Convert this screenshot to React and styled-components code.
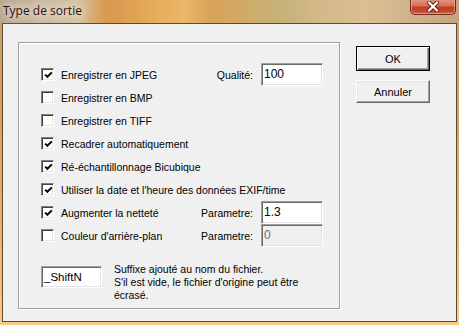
import React from "react";
import styled, { createGlobalStyle } from "styled-components";

const GlobalStyle = createGlobalStyle`
  html, body {
    margin: 0;
    padding: 0;
    background: #ffffff;
  }
  body {
    font-family: "Liberation Sans", Arial, sans-serif;
    font-size: 10.5px;
    color: #000;
  }
`;

const options = [
  { label: "Enregistrer en JPEG", checked: true, param: { label: "Qualité:", value: "100" } },
  { label: "Enregistrer en BMP", checked: false },
  { label: "Enregistrer en TIFF", checked: false },
  { label: "Recadrer automatiquement", checked: true },
  { label: "Ré-échantillonnage Bicubique", checked: true },
  { label: "Utiliser la date et l'heure des données EXIF/time", checked: true },
  { label: "Augmenter la netteté", checked: true, param: { label: "Parametre:", value: "1.3" } },
  { label: "Couleur d'arrière-plan", checked: false, param: { label: "Parametre:", value: "0", disabled: true } },
];

export default function App() {
  return (
    <>
      <GlobalStyle />
      <Window>
        <TitleBar>
          <Title>Type de sortie</Title>
          <CloseButton>
            <svg width="14" height="11" viewBox="0 0 14 11">
              <path d="M3 1.5 L11 9.5 M11 1.5 L3 9.5" stroke="#5a2418" strokeWidth="4" strokeLinecap="round" />
              <path d="M3 1.5 L11 9.5 M11 1.5 L3 9.5" stroke="#ffffff" strokeWidth="2.2" strokeLinecap="round" />
            </svg>
          </CloseButton>
        </TitleBar>
        <Frame>
          <Client>
            <GroupBox>
              <Rows>
                {options.map((o) => (
                  <Row key={o.label}>
                    <CheckBox>
                      {o.checked && (
                        <svg width="9" height="9" viewBox="0 0 9 9">
                          <path d="M1.2 3.6 L3.4 5.8 L7.8 1.4" stroke="#000" strokeWidth="2" fill="none" />
                        </svg>
                      )}
                    </CheckBox>
                    <Label>{o.label}</Label>
                    {o.param && (
                      <ParamGroup>
                        <ParamLabel>{o.param.label}</ParamLabel>
                        <Field $disabled={o.param.disabled}>{o.param.value}</Field>
                      </ParamGroup>
                    )}
                  </Row>
                ))}
              </Rows>
              <SuffixRow>
                <SuffixField>_ShiftN</SuffixField>
                <SuffixText>
                  Suffixe ajouté au nom du fichier.
                  <br />
                  S'il est vide, le fichier d'origine peut être
                  <br />
                  écrasé.
                </SuffixText>
              </SuffixRow>
            </GroupBox>
            <ButtonColumn>
              <Button $default>OK</Button>
              <Button>Annuler</Button>
            </ButtonColumn>
          </Client>
        </Frame>
      </Window>
    </>
  );
}

const Window = styled.div`
  width: 459px;
  height: 325px;
  display: flex;
  flex-direction: column;
  background: linear-gradient(180deg, #c4a070 0%, #d9a35c 40%, #f0bd70 85%, #f8cc86 100%);
  overflow: hidden;
`;

const TitleBar = styled.div`
  height: 23px;
  flex-shrink: 0;
  position: relative;
  display: flex;
  align-items: center;
  padding-left: 3px;
  background: linear-gradient(
    90deg,
    #b8a68c 0%,
    #cbbba2 10%,
    #d7c3a0 17%,
    #d8984e 23%,
    #e4a858 32%,
    #eab868 40%,
    #d8a258 46%,
    #cfac68 54%,
    #c6b27a 62%,
    #d4b98a 70%,
    #dbbf92 80%,
    #d0b28a 90%,
    #c4a47c 100%
  );
`;

const Title = styled.span`
  font-family: "Open Sans", "Noto Sans", sans-serif;
  font-size: 12px;
  color: #2a1214;
  text-shadow: 0 0 6px #efe6d8, 0 0 10px #efe6d8, 0 0 14px #efe6d8;
  margin-top: -3px;
`;

const CloseButton = styled.div`
  position: absolute;
  left: 410px;
  top: -1px;
  width: 46px;
  height: 16px;
  box-sizing: border-box;
  border: 1px solid #6a2a20;
  border-top: none;
  border-radius: 0 0 5px 5px;
  background: linear-gradient(180deg, #e49a86 0%, #d86e56 45%, #c43c24 55%, #c44a2a 85%, #d47048 100%);
  box-shadow: inset 0 0 0 1px rgba(255, 210, 190, 0.45);
  display: flex;
  align-items: center;
  justify-content: center;
`;

const Frame = styled.div`
  flex: 1;
  display: flex;
  padding: 0 2px 3px 2px;
`;

const Client = styled.div`
  flex: 1;
  display: flex;
  align-items: flex-start;
  background: #f0f0f0;
  border: 1px solid #5e4a34;
  padding: 18px 0 0 15px;
`;

const GroupBox = styled.div`
  width: 322px;
  height: 267px;
  box-sizing: border-box;
  border: 1px solid #a0a0a0;
  box-shadow: inset 1px 1px 0 #ffffff, 1px 1px 0 #ffffff;
  padding: 20px 16px 0 22px;
  display: flex;
  flex-direction: column;
`;

const Rows = styled.div`
  display: flex;
  flex-direction: column;
`;

const Row = styled.div`
  height: 23px;
  display: flex;
  align-items: center;
`;

const CheckBox = styled.span`
  width: 13px;
  height: 13px;
  box-sizing: border-box;
  flex-shrink: 0;
  background: #ffffff;
  border: 1px solid;
  border-color: #808080 #ffffff #ffffff #808080;
  box-shadow: inset 1px 1px 0 #404040, inset -1px -1px 0 #e3e3e3;
  display: flex;
  align-items: center;
  justify-content: center;
  padding: 1px 0 0 1px;
`;

const Label = styled.span`
  margin-left: 7px;
  white-space: nowrap;
`;

const ParamGroup = styled.div`
  margin-left: auto;
  display: flex;
  align-items: center;
  gap: 8px;
`;

const ParamLabel = styled.span`
  white-space: nowrap;
`;

const Field = styled.div`
  width: 62px;
  height: 23px;
  box-sizing: border-box;
  border: 1px solid;
  border-color: #a0a0a0 #ffffff #ffffff #a0a0a0;
  box-shadow: inset 1px 1px 0 #696969, inset -1px -1px 0 #e3e3e3;
  background: ${(p) => (p.$disabled ? "#f0f0f0" : "#ffffff")};
  color: ${(p) => (p.$disabled ? "#6d6d6d" : "#000000")};
  padding: 3px 0 0 2px;
  font-size: 12px;
  line-height: 15px;
`;

const SuffixRow = styled.div`
  margin-top: 16px;
  display: flex;
  align-items: flex-start;
  gap: 12px;
`;

const SuffixField = styled(Field)`
  width: 61px;
  height: 22px;
  margin-top: 3px;
  font-size: 11.5px;
`;

const SuffixText = styled.div`
  line-height: 13px;
  white-space: nowrap;
`;

const ButtonColumn = styled.div`
  margin-left: 16px;
  margin-top: 4px;
  display: flex;
  flex-direction: column;
  gap: 9px;
`;

const Button = styled.div`
  width: 74px;
  height: ${(p) => (p.$default ? "25px" : "23px")};
  box-sizing: border-box;
  background: #f0f0f0;
  border: 1px solid;
  border-color: ${(p) => (p.$default ? "#000000" : "#ffffff #696969 #696969 #ffffff")};
  box-shadow: ${(p) =>
    p.$default
      ? "inset 1px 1px 0 #ffffff, inset -1px -1px 0 #696969, inset -2px -2px 0 #a0a0a0"
      : "inset -1px -1px 0 #a0a0a0, inset 1px 1px 0 #e3e3e3"};
  display: flex;
  align-items: center;
  justify-content: center;
  font-size: 11px;
`;
